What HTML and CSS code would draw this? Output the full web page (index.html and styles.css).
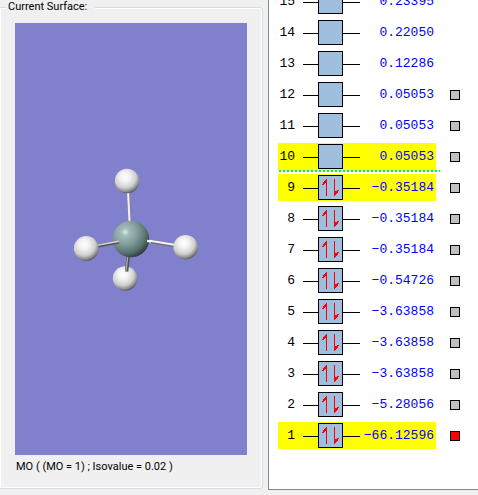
FILE: index.html
```html
<!DOCTYPE html>
<html lang="en">
<head>
<meta charset="utf-8">
<title>Molecular orbitals</title>
<link rel="stylesheet" href="styles.css">
</head>
<body>
<main class="layout">
  <fieldset class="surface">
    <legend class="surface-title">Current Surface:</legend>
    <div class="surface-body">
      <svg class="viewport" viewBox="0 0 232 432" preserveAspectRatio="xMidYMid meet" aria-hidden="true">
        <defs>
          <radialGradient id="hydrogen" cx="0.42" cy="0.34" r="0.68">
            <stop offset="0" stop-color="#ffffff"/>
            <stop offset="0.3" stop-color="#f2f2f2"/>
            <stop offset="0.65" stop-color="#cfcfcf"/>
            <stop offset="0.88" stop-color="#8a8a8a"/>
            <stop offset="1" stop-color="#505050"/>
          </radialGradient>
          <radialGradient id="silicon" cx="0.34" cy="0.31" r="0.76">
            <stop offset="0" stop-color="#dcebea"/>
            <stop offset="0.14" stop-color="#a3bbb9"/>
            <stop offset="0.45" stop-color="#809d9b"/>
            <stop offset="0.75" stop-color="#577270"/>
            <stop offset="1" stop-color="#263534"/>
          </radialGradient>
        </defs>
        <circle cx="110" cy="255.5" r="12.2" fill="url(#hydrogen)"/>
        <path d="M113.4 232L111.6 248.5" stroke="#505050" stroke-width="3.4"/>
        <path d="M112.8 232L111 248.5" stroke="#a8a8a8" stroke-width="1.4"/>
        <path d="M113.4 168L115 200" stroke="#858585" stroke-width="3.2"/>
        <path d="M113 168L114.6 200" stroke="#f2f2f2" stroke-width="2"/>
        <path d="M130 217.6L161 222.6" stroke="#6e6e6e" stroke-width="3.4"/>
        <path d="M130 217L161 222" stroke="#f4f4f4" stroke-width="2"/>
        <circle cx="116" cy="216" r="18.3" fill="url(#silicon)"/>
        <path d="M132 217.9L136 218.5" stroke="#f4f4f4" stroke-width="2.4"/>
        <path d="M82 223L104 218.8" stroke="#555555" stroke-width="3.4"/>
        <path d="M82 222.3L104 218.1" stroke="#d2d2d2" stroke-width="1.6"/>
        <circle cx="112" cy="158" r="12.2" fill="url(#hydrogen)"/>
        <circle cx="71.2" cy="225.4" r="12.4" fill="url(#hydrogen)"/>
        <circle cx="170.6" cy="224.2" r="12.2" fill="url(#hydrogen)"/>
      </svg>
      <p class="surface-caption">MO ( (MO = 1) ; Isovalue = 0.02 )</p>
    </div>
  </fieldset>

  <section class="orbitals">
    <svg class="symbols" width="0" height="0" aria-hidden="true">
      <symbol id="level" viewBox="0 0 57 25">
        <path d="M0 13.5H57" stroke="#000"/>
        <rect x="15.5" y="0.5" width="24" height="24" fill="#a0bede" stroke="#000"/>
      </symbol>
      <symbol id="pair" viewBox="0 0 57 25">
        <path d="M23.5 4V21M31.5 4V21" stroke="#f00" fill="none"/>
        <path d="M24 4H23V5H22V6H21V7H20V9H19V10H21V9H22V8H24ZM31 21H32V20H33V19H34V18H35V16H36V15H34V16H32V15H31Z" fill="#f00"/>
      </symbol>
    </svg>
    <table class="levels">
      <tbody id="levels"></tbody>
    </table>
  </section>
</main>
<script src="orbitals.js"></script>
</body>
</html>
```

FILE: styles.css
```css
* {
  box-sizing: border-box;
}

body {
  margin: 0;
  background: #f0f0f0;
  color: #000;
  font-family: Roboto, "Liberation Sans", sans-serif;
  font-size: 11px;
  line-height: 14px;
}

.layout {
  display: grid;
  grid-template-columns: minmax(0, 268fr) minmax(0, 210fr);
  height: 100vh;
  padding-bottom: 5px;
}

.surface {
  display: flex;
  flex-direction: column;
  min-width: 0;
  margin: 0 5px 1px 0;
  padding: 0 15px;
  border: 1px solid #d3dde4;
  border-left: 0;
  border-radius: 0 3px 3px 0;
  box-shadow: inset 0 0 0 1px #fff;
}

.surface-title {
  margin-left: -8px;
  padding: 0 8px 0 1px;
  background: #f0f0f0;
}

.surface-body {
  display: flex;
  flex: 1;
  flex-direction: column;
  min-height: 0;
  padding: 9px 0 14px;
}

.viewport {
  display: block;
  flex: 1;
  width: 100%;
  min-height: 0;
  background: #8080cc;
}

.surface-caption {
  margin: 5px 0 0;
  padding-left: 1px;
  white-space: nowrap;
}

.orbitals {
  overflow: hidden;
  padding-left: 9px;
  border: solid #828790;
  border-width: 0 0 1px 1px;
  background: #fff;
}

.symbols {
  position: absolute;
}

.levels {
  margin-top: -16px;
  border-collapse: separate;
  border-spacing: 0 4px;
  font-family: "Liberation Mono", monospace;
  font-size: 13px;
  line-height: 27px;
}

.levels th,
.levels td {
  height: 27px;
  padding: 0;
  font-weight: normal;
  text-align: right;
  vertical-align: middle;
}

.levels .number {
  position: relative;
  width: 25px;
  padding-right: 8px;
}

.levels .diagram {
  width: 57px;
}

.diagram svg {
  display: block;
  width: 57px;
  height: 25px;
}

.levels .energy {
  width: 76px;
  padding-right: 2px;
  color: #00f;
}

.levels .pick {
  width: 24px;
}

.highlight .number,
.highlight .diagram,
.highlight .energy {
  background: #ff0;
}

.frontier .number::before {
  content: "";
  position: absolute;
  top: -4px;
  left: 1px;
  width: 161px;
  height: 2px;
  background: repeating-linear-gradient(90deg, #0f0 0 2px, transparent 2px 4px);
}

.swatch {
  display: block;
  width: 10px;
  height: 10px;
  margin-left: auto;
  padding: 0;
  border: 1px solid #000;
  border-radius: 0;
  background: #c0c0c0;
}

.swatch-current {
  background: #f00;
}
```

FILE: orbitals.js
```js
const energies = [
  "−66.12596", "−5.28056", "−3.63858", "−3.63858", "−3.63858",
  "−0.54726", "−0.35184", "−0.35184", "−0.35184", "0.05053",
  "0.05053", "0.05053", "0.12286", "0.22050", "0.23395"
];
const occupied = 9;
const lastWithSurface = 12;
const highlighted = [1, 9, 10];
const current = 1;

const rows = energies.map((energy, index) => {
  const n = index + 1;
  const classes = [];
  if (highlighted.includes(n)) classes.push("highlight");
  if (n === occupied) classes.push("frontier");
  const pair = n <= occupied ? '<use href="#pair"/>' : "";
  const swatch = n <= lastWithSurface
    ? `<button type="button" class="swatch${n === current ? " swatch-current" : ""}" aria-label="Orbital ${n}"></button>`
    : "";
  return `<tr class="${classes.join(" ")}">
    <th class="number" scope="row">${n}</th>
    <td class="diagram"><svg viewBox="0 0 57 25" aria-hidden="true"><use href="#level"/>${pair}</svg></td>
    <td class="energy">${energy}</td>
    <td class="pick">${swatch}</td>
  </tr>`;
});

document.getElementById("levels").innerHTML = rows.reverse().join("");
```
